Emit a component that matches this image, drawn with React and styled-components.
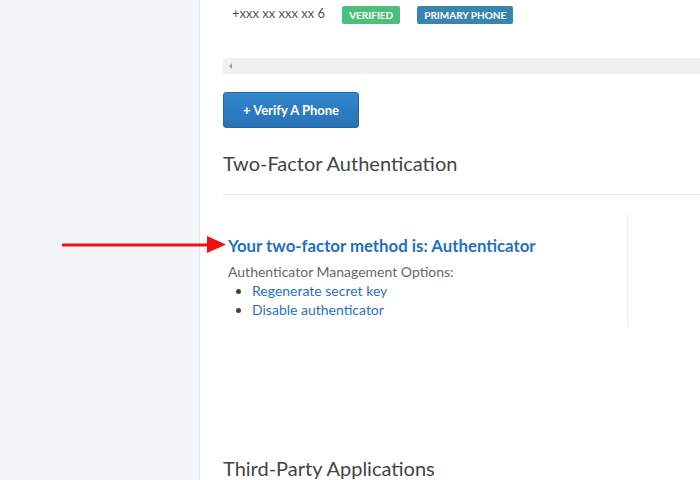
import React from 'react'
import styled, { createGlobalStyle } from 'styled-components'

const Global = createGlobalStyle`
    html, body {
        margin: 0;
        padding: 0;
        background: #ffffff;
        font-family: 'Lato', 'Open Sans', sans-serif;
    }
`

const Page = styled.div`
    display: flex;
    width: 700px;
    height: 480px;
    overflow: hidden;
    position: relative;
`

const Sidebar = styled.div`
    width: 199px;
    flex-shrink: 0;
    background-color: #f3f6f9;
    border-right: 1px solid #e3e7ec;
`

const Main = styled.div`
    flex: 1;
    min-width: 0;
    padding-left: 23px;
    display: flex;
    flex-direction: column;

    & > * {
        flex-shrink: 0;
    }
`

const PhoneRow = styled.div`
    display: flex;
    align-items: center;
    height: 18px;
    margin-top: 6px;
    padding-left: 9px;
`

const PhoneNumber = styled.span`
    font-size: 13px;
    color: #555;
    margin-right: 17px;
    position: relative;
    top: -2px;
`

const Badge = styled.span`
    display: inline-flex;
    align-items: center;
    height: 18px;
    padding: 0 7px;
    margin-right: 17px;
    border-radius: 2px;
    font-size: 10px;
    font-weight: 700;
    color: #fff;
    text-transform: uppercase;
    background-color: ${props => props.tone === 'green' ? '#4bbf7b' : '#3a85ad'};
`

const Scrollbar = styled.div`
    margin-top: 34px;
    height: 16px;
    background-color: #f0f0f0;
    display: flex;
    align-items: center;
    padding-left: 6px;
`

const ArrowLeft = styled.span`
    width: 0;
    height: 0;
    border-top: 3px solid transparent;
    border-bottom: 3px solid transparent;
    border-right: 3px solid #a3a3a3;
`

const Button = styled.button`
    align-self: flex-start;
    margin-top: 18px;
    width: 136px;
    height: 36px;
    border: 1px solid #2468a8;
    border-radius: 3px;
    background: linear-gradient(#3487cc, #2772b7);
    color: #fff;
    font-family: inherit;
    font-size: 13px;
    font-weight: 700;
    cursor: pointer;
`

const SectionTitle = styled.h2`
    margin: ${props => props.top}px 0 0;
    font-size: 20px;
    font-weight: 400;
    line-height: 28px;
    color: #444;
`

const Divider = styled.div`
    margin-top: 17px;
    height: 1px;
    background-color: #e6e6e6;
`

const Panel = styled.div`
    margin-top: 19px;
    display: flex;
`

const PanelBody = styled.div`
    width: 399px;
    padding: 22px 0 8px 5px;
    border-right: 1px solid #ececec;
`

const Method = styled.h3`
    margin: 0;
    font-size: 16.8px;
    font-weight: 700;
    line-height: 20px;
    color: #1f6fc5;
`

const Caption = styled.div`
    margin-top: 6px;
    font-size: 14px;
    line-height: 19px;
    color: #666;
`

const List = styled.ul`
    margin: 0;
    padding-left: 24px;
    font-size: 14px;
    line-height: 19px;
    color: #444;
`

const Link = styled.a`
    color: #2c6fbf;
    text-decoration: none;
`

const Pointer = styled.svg`
    position: absolute;
    left: 62px;
    top: 235px;
`

export default () => {
    return (
        <Page>
            <Global />
            <Sidebar />
            <Main>
                <PhoneRow>
                    <PhoneNumber>+xxx xx xxx xx 6</PhoneNumber>
                    <Badge tone='green'>Verified</Badge>
                    <Badge tone='blue'>Primary Phone</Badge>
                </PhoneRow>
                <Scrollbar>
                    <ArrowLeft />
                </Scrollbar>
                <Button>+ Verify A Phone</Button>
                <SectionTitle top={21}>Two-Factor Authentication</SectionTitle>
                <Divider />
                <Panel>
                    <PanelBody>
                        <Method>Your two-factor method is: Authenticator</Method>
                        <Caption>Authenticator Management Options:</Caption>
                        <List>
                            <li><Link href='#'>Regenerate secret key</Link></li>
                            <li><Link href='#'>Disable authenticator</Link></li>
                        </List>
                    </PanelBody>
                </Panel>
                <SectionTitle top={127}>Third-Party Applications</SectionTitle>
            </Main>
            <Pointer width='166' height='20' viewBox='0 0 166 20'>
                <line x1='1' y1='10' x2='148' y2='10' stroke='#ee1111' strokeWidth='3' strokeLinecap='round' />
                <polygon points='145,1 164,9.5 145,18' fill='#ee1111' />
            </Pointer>
        </Page>
    )
}
